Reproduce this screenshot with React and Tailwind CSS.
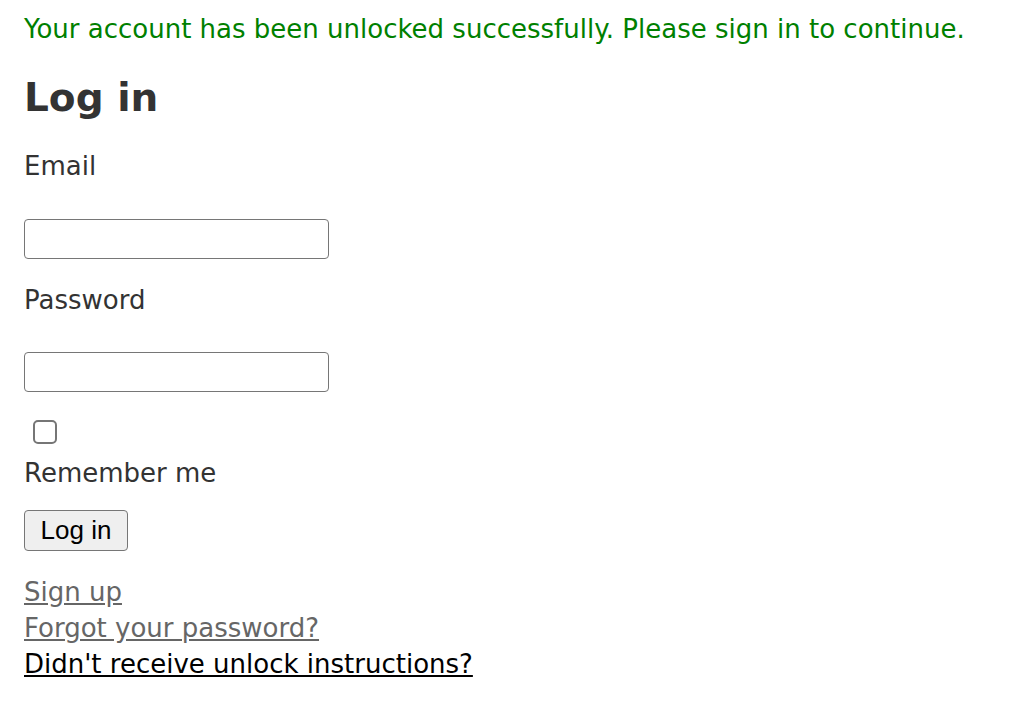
import React from 'react';

const App = () => {
  return (
    <div className="min-h-screen bg-white px-6 pt-[11px] text-[#333] font-['DejaVu_Sans',Verdana,sans-serif] text-[26px]">
      <p className="leading-[36px] text-[#008000]">
        Your account has been unlocked successfully. Please sign in to continue.
      </p>

      <h1 className="mt-[29px] text-[39px] font-bold leading-[44px]">Log in</h1>

      <form>
        <div className="mt-[28px] leading-[36px]">
          <label htmlFor="email">Email</label>
          <input
            id="email"
            type="email"
            className="mt-[35px] block h-[40px] w-[305px] rounded-[4px] border-[1.5px] border-[#767676] bg-white"
          />
        </div>

        <div className="mt-[23px] leading-[36px]">
          <label htmlFor="password">Password</label>
          <input
            id="password"
            type="password"
            className="mt-[34px] block h-[40px] w-[305px] rounded-[4px] border-[1.5px] border-[#767676] bg-white"
          />
        </div>

        <div className="mt-[28px]">
          <div className="ml-[9px] h-[24px] w-[24px] rounded-[5px] border-[2px] border-[#767676] bg-white" />
          <label className="mt-[11px] block leading-[36px]">Remember me</label>
        </div>

        <button
          type="button"
          className="mt-[19px] h-[41px] w-[104px] rounded-[4px] border-[1.5px] border-[#767676] bg-[#efefef] text-[26px] text-black font-['Liberation_Sans',Arial,sans-serif]"
        >
          Log in
        </button>
      </form>

      <div className="mt-[23px] leading-[36px]">
        <a href="#" className="block w-fit text-[#666] underline">Sign up</a>
        <a href="#" className="block w-fit text-[#666] underline">Forgot your password?</a>
        <a href="#" className="block w-fit text-black underline">Didn't receive unlock instructions?</a>
      </div>
    </div>
  );
};

export default App;
